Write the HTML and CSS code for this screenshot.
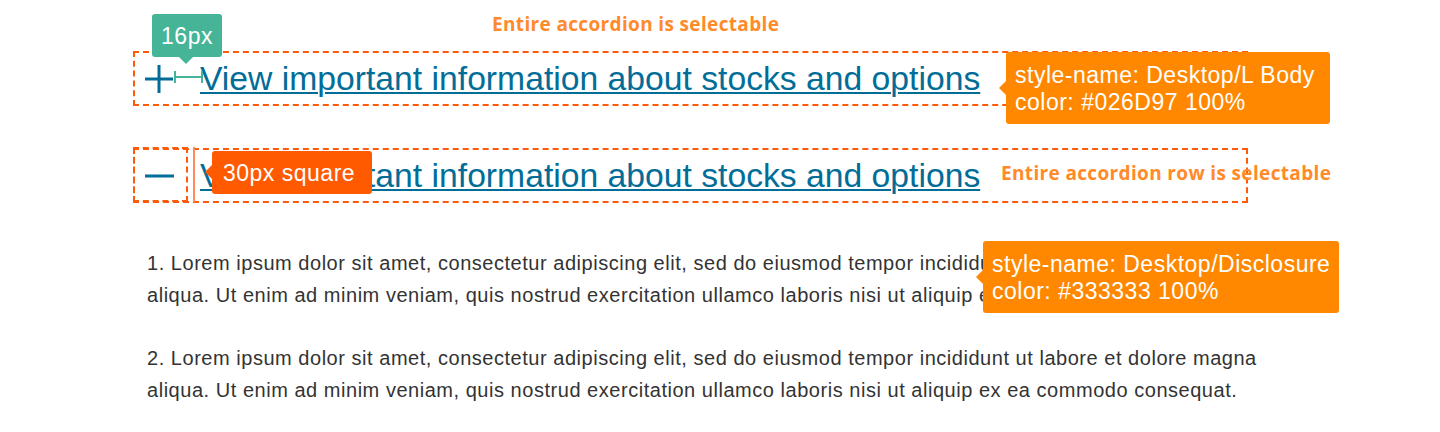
FILE: index.html
```html
<!DOCTYPE html>
<html lang="en">
<head>
<meta charset="utf-8">
<title>Accordion spec</title>
<link rel="stylesheet" href="styles.css">
</head>
<body>
<div class="page">
  <div class="accordion">
    <div class="acc-row">
      <svg class="acc-icon" width="30" height="30" viewBox="0 0 30 30" aria-hidden="true">
        <rect x="1" y="13.5" width="28" height="3" fill="#026D97"/>
        <rect x="13.5" y="1" width="3" height="28" fill="#026D97"/>
      </svg>
      <a class="acc-link" href="#">View important information about stocks and options</a>
    </div>
    <div class="acc-row">
      <svg class="acc-icon" width="30" height="30" viewBox="0 0 30 30" aria-hidden="true">
        <rect x="1" y="13.5" width="30" height="3" fill="#026D97"/>
      </svg>
      <a class="acc-link" href="#">View important information about stocks and options</a>
    </div>
  </div>

  <div class="disclosure">
    <p>1. Lorem ipsum dolor sit amet, consectetur adipiscing elit, sed do eiusmod tempor incididunt ut labore et dolore magna aliqua. Ut enim ad minim veniam, quis nostrud exercitation ullamco laboris nisi ut aliquip ex ea commodo consequat.</p>
    <p>2. Lorem ipsum dolor sit amet, consectetur adipiscing elit, sed do eiusmod tempor incididunt ut labore et dolore magna aliqua. Ut enim ad minim veniam, quis nostrud exercitation ullamco laboris nisi ut aliquip ex ea commodo consequat.</p>
  </div>

  <!-- annotations -->
  <div class="note note-top">Entire accordion is selectable</div>
  <div class="note note-row">Entire accordion row is selectable</div>

  <div class="icon-frame"></div>
  <div class="icon-edge"></div>

  <svg class="measure" width="30" height="14" viewBox="0 0 30 14" aria-hidden="true">
    <rect x="0" y="1" width="2" height="12" fill="#45B497"/>
    <rect x="0" y="6" width="29" height="2" fill="#45B497"/>
    <rect x="27" y="1" width="2" height="12" fill="#45B497"/>
  </svg>

  <div class="tip tip-green">16px</div>
  <div class="tip tip-red">30px square</div>
  <div class="tip tip-orange tip-body">style-name: Desktop/L Body<br>color: #026D97 100%</div>
  <div class="tip tip-orange tip-disc">style-name: Desktop/Disclosure<br>color: #333333 100%</div>
</div>
</body>
</html>
```

FILE: styles.css
```css
* { box-sizing: border-box; }

html, body {
  margin: 0;
  background: #ffffff;
}

.page {
  position: relative;
  width: 1440px;
  height: 432px;
  padding: 51px 0 0 133px;
  font-family: "Liberation Sans", Arial, sans-serif;
  overflow: hidden;
}

.accordion {
  display: flex;
  flex-direction: column;
  gap: 42px;
  width: 1115px;
}

.acc-row {
  position: relative;
  display: flex;
  align-items: center;
  gap: 26px;
  height: 55px;
  padding-left: 9px;
  border: 2px dashed #FF5A0A;
}

.acc-icon {
  flex: none;
  display: block;
}

.acc-link {
  font-family: "Liberation Sans", Arial, sans-serif;
  font-size: 33.7px;
  line-height: 38px;
  color: #026D97;
  text-decoration: underline;
  text-decoration-thickness: 2px;
  text-underline-offset: 2px;
  white-space: nowrap;
  margin-bottom: 2px;
}

.disclosure {
  margin-top: 44px;
  padding-left: 14px;
  width: 1150px;
}

.disclosure p {
  margin: 0 0 31px;
  font-family: "Liberation Sans", Arial, sans-serif;
  font-size: 20px;
  line-height: 32px;
  letter-spacing: 0.53px;
  color: #333333;
}

/* ---------- annotations ---------- */

.note {
  position: absolute;
  font-family: "Open Sans", "Liberation Sans", sans-serif;
  font-weight: 700;
  font-size: 19px;
  line-height: 24px;
  letter-spacing: 0.35px;
  color: #FF8A2A;
  white-space: nowrap;
}

.note-top { left: 492px; top: 12px; }
.note-row { left: 1001px; top: 161px; }

.icon-frame {
  position: absolute;
  left: 133px;
  top: 147px;
  width: 55px;
  height: 55px;
  border: 2px dashed #FF5A0A;
}

.icon-edge {
  position: absolute;
  left: 193px;
  top: 147px;
  width: 2px;
  height: 55px;
  background: #FF8A5A;
}

.measure {
  position: absolute;
  left: 174px;
  top: 70px;
}

.tip {
  position: absolute;
  color: #ffffff;
  font-family: "Liberation Sans", Arial, sans-serif;
  font-size: 23px;
  line-height: 27px;
  letter-spacing: 0.5px;
  border-radius: 3px;
  white-space: nowrap;
}

.tip::after {
  content: "";
  position: absolute;
  width: 0;
  height: 0;
  border: 7px solid transparent;
}

.tip-green {
  left: 152px;
  top: 14px;
  width: 70px;
  height: 43px;
  padding-top: 9px;
  text-align: center;
  background: #45B497;
}

.tip-green::after {
  left: 27px;
  top: 100%;
  border-top-color: #45B497;
}

.tip-red {
  left: 212px;
  top: 151px;
  width: 160px;
  height: 43px;
  padding: 9px 0 0 11px;
  background: #FF5A00;
}

.tip-red::after {
  right: 100%;
  top: 14px;
  border-right-color: #FF5A00;
}

.tip-orange {
  background: #FF8800;
  padding: 10px 0 0 9px;
}

.tip-orange::after {
  right: 100%;
  top: 29px;
  border-width: 7px 7px 7px 0;
  border-right-color: #FF8800;
}

.tip-body {
  left: 1006px;
  top: 52px;
  width: 324px;
  height: 72px;
}

.tip-disc {
  left: 983px;
  top: 241px;
  width: 356px;
  height: 72px;
}
```
